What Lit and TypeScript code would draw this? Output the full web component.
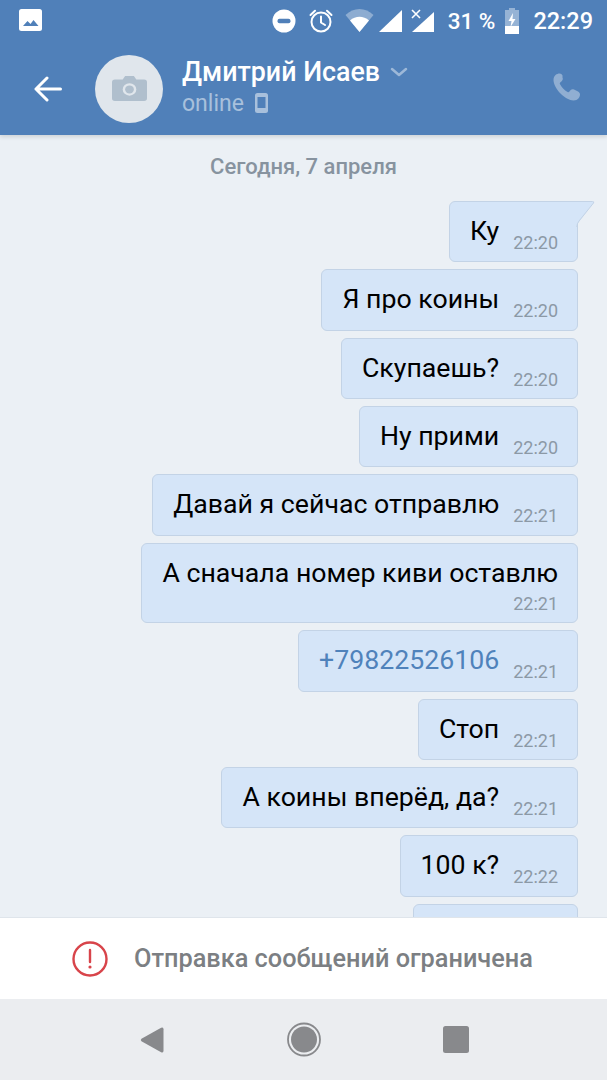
import { LitElement, html, css, svg } from "lit";
import { customElement } from "lit/decorators.js";

const msgs: { t: string; time: string; link?: boolean; tail?: boolean; wrap?: boolean }[] = [
  { t: "Ку", time: "22:20", tail: true },
  { t: "Я про коины", time: "22:20" },
  { t: "Скупаешь?", time: "22:20" },
  { t: "Ну прими", time: "22:20" },
  { t: "Давай я сейчас отправлю", time: "22:21" },
  { t: "А сначала номер киви оставлю", time: "22:21", wrap: true },
  { t: "+79822526106", time: "22:21", link: true },
  { t: "Стоп", time: "22:21" },
  { t: "А коины вперёд, да?", time: "22:21" },
  { t: "100 к?", time: "22:22" },
];

@customElement("app-root")
export class AppRoot extends LitElement {
  static styles = css`
    :host {
      display: flex;
      flex-direction: column;
      width: 607px;
      height: 1080px;
      overflow: hidden;
      font-family: Roboto, "Noto Sans", sans-serif;
      background: #ebf0f5;
    }
    .header {
      height: 135px;
      flex: none;
      background: #5080b9;
      color: #fff;
      display: flex;
      flex-direction: column;
      position: relative;
      z-index: 2;
      box-shadow: 0 2px 4px rgba(0, 0, 0, 0.12);
    }
    .status {
      height: 42px;
      display: flex;
      align-items: center;
      padding: 0 14px 0 19px;
      flex: none;
    }
    .status svg {
      display: block;
      flex: none;
    }
    .status .spacer {
      flex: 1;
    }
    .alarm {
      margin-left: 12px;
    }
    .wifi {
      margin-left: 11px;
    }
    .sig1 {
      margin-left: 5px;
    }
    .sig2 {
      margin-left: 9px;
    }
    .batt {
      margin-left: 10px;
    }
    .pct {
      font-size: 22.5px;
      font-weight: 500;
      margin-left: 13px;
      white-space: nowrap;
    }
    .clock {
      font-size: 23.5px;
      font-weight: 500;
      margin-left: 14px;
    }
    .bar {
      flex: 1;
      display: flex;
      align-items: center;
      padding: 0 25px 0 34px;
    }
    .back {
      flex: none;
      display: block;
    }
    .avatar {
      width: 68px;
      height: 68px;
      border-radius: 50%;
      background: #e0e6ec;
      margin-left: 33px;
      display: flex;
      align-items: center;
      justify-content: center;
      flex: none;
    }
    .who {
      margin-left: 19px;
      flex: 1;
      padding-bottom: 3px;
    }
    .name {
      font-size: 26.8px;
      font-weight: 500;
      line-height: 31px;
      display: flex;
      align-items: center;
      gap: 10px;
    }
    .online {
      font-size: 23px;
      line-height: 29px;
      color: #a8c0dc;
      display: flex;
      align-items: center;
      gap: 11px;
      margin-top: 1px;
    }
    .phone {
      display: block;
      flex: none;
      margin-bottom: 4px;
    }
    .chat {
      flex: 1;
      min-height: 0;
      overflow: hidden;
      display: flex;
      flex-direction: column;
      align-items: flex-end;
      padding: 0 29px 0 0;
    }
    .date {
      align-self: stretch;
      text-align: center;
      font-size: 22px;
      font-weight: 500;
      color: #87939f;
      margin: 20px -29px 22px 0;
      line-height: 24px;
      height: 25px;
    }
    .bubble {
      position: relative;
      flex: none;
      box-sizing: border-box;
      background: #d5e5f8;
      border: 1px solid #c3d3e6;
      border-radius: 6px;
      height: 61.3px;
      margin-bottom: 7.05px;
      display: flex;
      align-items: flex-start;
      padding: 11px 19px 0 20px;
      gap: 14px;
    }
    .bubble.wrap {
      height: 80.5px;
      display: block;
    }
    .bubble.tail {
      border-top-right-radius: 0;
    }
    .bubble.cut {
      width: 165px;
    }
    .tailmark {
      position: absolute;
      right: -18px;
      top: -1px;
      display: block;
    }
    .text {
      font-size: 26.7px;
      line-height: 36px;
      color: #000;
      white-space: nowrap;
    }
    .text.link {
      color: #4f82bb;
    }
    .time {
      font-size: 18px;
      line-height: 22px;
      color: #8c99a6;
      margin-top: 19px;
      white-space: nowrap;
    }
    .wrap .time {
      margin-top: 2px;
      text-align: right;
    }
    .limit {
      height: 82px;
      flex: none;
      background: #fff;
      border-top: 1px solid #dfe5eb;
      box-sizing: border-box;
      display: flex;
      align-items: center;
      padding-left: 72px;
      gap: 26px;
      position: relative;
    }
    .limit span {
      font-size: 25.3px;
      font-weight: 500;
      color: #7c7f83;
      white-space: nowrap;
    }
    .nav {
      height: 81px;
      flex: none;
      background: #ebedf0;
      display: flex;
      align-items: center;
      padding-left: 140px;
      box-sizing: border-box;
    }
    .nav svg {
      display: block;
      flex: none;
    }
    .nav .home {
      margin-left: 123px;
    }
    .nav .recent {
      margin-left: 122px;
    }
  `;

  render() {
    return html`
      <div class="header">
        <div class="status">
          <svg width="24" height="24" viewBox="0 0 24 24">
            <rect x="0" y="0" width="23" height="22" rx="2.5" fill="#fff"></rect>
            <path d="M4 17l4.5-5 3 3 3-4 5 6z" fill="#5080b9"></path>
          </svg>
          <div class="spacer"></div>
          <svg width="24" height="24" viewBox="0 0 24 24">
            <circle cx="12" cy="12" r="11.500" fill="#fff"></circle>
            <rect x="5.500" y="9.800" width="13" height="4.400" rx="2" fill="#5080b9"></rect>
          </svg>
          <svg class="alarm" width="26" height="26" viewBox="0 0 26 26" fill="none" stroke="#fff" stroke-width="2">
            <circle cx="13" cy="14" r="9.500"></circle>
            <path d="M13 8.500V14.500L17 17M2.500 7L7 2.800M23.500 7L19 2.800" stroke-linecap="round"></path>
          </svg>
          <svg class="wifi" width="29" height="24" viewBox="0 0 28 24">
            <path d="M0 6C8-2 20-2 28 6L14 23z" fill="#fff" fill-opacity=".35"></path>
            <path d="M4.500 11.500C10 6.500 18 6.500 23.500 11.500L14 23z" fill="#fff"></path>
          </svg>
          <svg class="sig1" width="23" height="24" viewBox="0 0 23 24">
            <path d="M23 1V23H0z" fill="#fff"></path>
          </svg>
          <svg class="sig2" width="24" height="24" viewBox="0 0 24 24">
            <path d="M23 3V23H1z" fill="#fff"></path>
            <path d="M1 1L9 9M9 1L1 9" stroke="#fff" stroke-width="1.600" fill="none"></path>
          </svg>
          <span class="pct">31 %</span>
          <svg class="batt" width="14" height="26" viewBox="0 0 14 26">
            <path d="M4 0h6v2h4v24H0V2h4z" fill="#fff" fill-opacity=".4"></path>
            <path d="M0 18h14v8H0z" fill="#fff"></path>
            <path d="M8 5L3.500 13h3L5.500 19 10.500 11h-3z" fill="#fff"></path>
          </svg>
          <span class="clock">22:29</span>
        </div>
        <div class="bar">
          <svg class="back" width="28" height="26" viewBox="0 0 28 26" fill="none" stroke="#fff" stroke-width="3" stroke-linecap="round" stroke-linejoin="round">
            <path d="M2 13H26.500M13 2L2 13L13 24"></path>
          </svg>
          <div class="avatar">
            <svg width="35" height="25" viewBox="0 0 36 28" preserveAspectRatio="none">
              <path d="M3 4h8l2.500-4h9L25 4h8a3 3 0 0 1 3 3v18a3 3 0 0 1-3 3H3a3 3 0 0 1-3-3V7a3 3 0 0 1 3-3z" fill="#b0bfcd"></path>
              <circle cx="18" cy="15" r="7" fill="#e0e6ec"></circle>
              <circle cx="18" cy="15" r="4.500" fill="#b0bfcd"></circle>
            </svg>
          </div>
          <div class="who">
            <div class="name">
              Дмитрий Исаев
              <svg width="18" height="10" viewBox="0 0 18 10" fill="none" stroke="#9db8d8" stroke-width="2.500" stroke-linecap="round" stroke-linejoin="round">
                <path d="M2 2L9 8L16 2"></path>
              </svg>
            </div>
            <div class="online">
              online
              <svg width="13" height="20" viewBox="0 0 13 20">
                <rect x="0" y="0" width="13" height="20" rx="2.500" fill="#a8c0dc"></rect>
                <rect x="2.500" y="4" width="8" height="11" fill="#5080b9"></rect>
              </svg>
            </div>
          </div>
          <svg class="phone" width="30" height="30" viewBox="0 0 30 30">
            <path d="M7.500 1.500C5 1.500 1.500 3.500 1.500 8c0 4 3 9.500 7 13.500s9 7 13 7c4.500 0 6.500-3.500 6.500-6 0-1.500-1-2.500-2-3l-4-2c-1.200-.6-2.500-.4-3.300.6l-1.500 1.700c-.5.500-1 .5-1.600.2-1.700-1-3.100-2-4.500-3.500s-2.400-3-3.200-4.500c-.3-.6-.2-1.100.3-1.600l1.700-1.500c1-.8 1.200-2.100.6-3.300L10.500 3.500c-.6-1.100-1.500-2-3-2z" fill="#90aed2"></path>
          </svg>
        </div>
      </div>
      <div class="chat">
        <div class="date">Сегодня, 7 апреля</div>
        ${msgs.map(
          (m) => html`
            <div class="bubble ${m.wrap ? "wrap" : ""} ${m.tail ? "tail" : ""}">
              <div class="text ${m.link ? "link" : ""}">${m.t}</div>
              <div class="time">${m.time}</div>
              ${m.tail
                ? html`<svg class="tailmark" width="19" height="26" viewBox="0 0 19 26">
                    ${svg`<path d="M0 .5H16.500Q18.500 .5 17.500 2L1 23.500 0 26z" fill="#d5e5f8"></path>
                    <path d="M0 .5H16.500Q18.500 .5 17.500 2L3 20Q.8 22.800 .8 26" fill="none" stroke="#c3d3e6"></path>`}
                  </svg>`
                : ""}
            </div>
          `
        )}
        <div class="bubble cut"></div>
      </div>
      <div class="limit">
        <svg width="36" height="36" viewBox="0 0 36 36" fill="none">
          <circle cx="18" cy="18" r="16.500" stroke="#d8444a" stroke-width="2.400"></circle>
          <path d="M18 9V21" stroke="#d8444a" stroke-width="2.400" stroke-linecap="round"></path>
          <circle cx="18" cy="26" r="1.600" fill="#d8444a"></circle>
        </svg>
        <span>Отправка сообщений ограничена</span>
      </div>
      <div class="nav">
        <svg width="24" height="26" viewBox="0 0 25 30" preserveAspectRatio="none">
          <path d="M24.500 2.500V27.500Q24.500 30 22 29L1.500 16.500Q0 15 1.500 13.500L22 1Q24.500 0 24.500 2.500z" fill="#88898c"></path>
        </svg>
        <svg class="home" width="34" height="35" viewBox="0 0 34 35">
          <circle cx="17" cy="17.500" r="16" fill="none" stroke="#88898c" stroke-width="1.800"></circle>
          <circle cx="17" cy="17.500" r="13" fill="#88898c"></circle>
        </svg>
        <svg class="recent" width="26" height="27" viewBox="0 0 26 27">
          <rect width="26" height="27" rx="2.500" fill="#88898c"></rect>
        </svg>
      </div>
    `;
  }
}
